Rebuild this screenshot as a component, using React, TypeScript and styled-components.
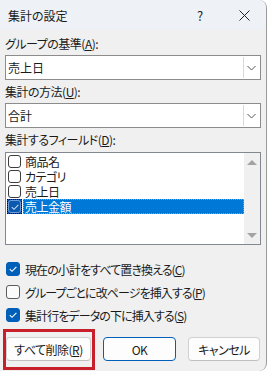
import React from 'react';
import styled, { createGlobalStyle } from 'styled-components';

const Global = createGlobalStyle`
    html, body {
        margin: 0;
        padding: 0;
        background: #ffffff;
    }
    body {
        font-family: 'Noto Sans CJK JP', 'Noto Sans', sans-serif;
        font-feature-settings: 'palt';
        color: #1a1a1a;
    }
`;

const Window = styled.div`
    position: relative;
    width: 266px;
    height: 371px;
    background: #f0f0f0;
    border-right: 1px solid #9a9a9a;
    border-bottom-right-radius: 8px;
    border-top-right-radius: 8px;
    overflow: hidden;
    box-sizing: content-box;
`;

const TitleBar = styled.div`
    height: 30px;
    display: flex;
    align-items: center;
    background: #eef2f7;
    padding-left: 8px;
`;

const Title = styled.div`
    flex: 1;
    font-size: 12px;
`;

const TitleButton = styled.div<{ $w: number }>`
    width: ${p => p.$w}px;
    height: 30px;
    display: flex;
    align-items: center;
    justify-content: center;
    font-size: 13px;
    color: #222;
`;

const Body = styled.div`
    padding: 0 5px 0 5px;
    letter-spacing: -0.5px;
`;

const Label = styled.div<{ $top: number }>`
    margin-top: ${p => p.$top}px;
    height: 16px;
    line-height: 16px;
    font-size: 12px;
`;

const Combo = styled.div`
    margin-top: 3px;
    height: 23px;
    display: flex;
    background: #ffffff;
    border: 1px solid #8c8c8c;
`;

const ComboText = styled.div`
    flex: 1;
    padding-left: 2px;
    font-size: 12px;
    line-height: 23px;
    letter-spacing: 0;
`;

const ComboButton = styled.div`
    width: 15px;
    margin: 1px 1px 1px 0;
    border-left: 1px solid #d9d9d9;
    display: flex;
    align-items: center;
    justify-content: center;
`;

const List = styled.div`
    margin-top: 4px;
    height: 91px;
    display: flex;
    background: #ffffff;
    border: 1px solid #828790;
`;

const Items = styled.div`
    flex: 1;
    padding: 1px 0 0 0;
`;

const Item = styled.div<{ $selected?: boolean }>`
    height: 15px;
    display: flex;
    align-items: center;
    font-size: 12px;
    color: ${p => (p.$selected ? '#ffffff' : '#1a1a1a')};
`;

const BoxWrap = styled.div<{ $selected?: boolean }>`
    width: 15px;
    height: 15px;
    margin-left: 1px;
    display: flex;
    align-items: center;
    justify-content: center;
    box-sizing: border-box;
    border: 1px dotted ${p => (p.$selected ? '#000' : 'transparent')};
    background: ${p => (p.$selected ? '#0a58b0' : 'transparent')};
`;

const SmallBox = styled.div<{ $selected?: boolean }>`
    width: 13px;
    height: 13px;
    box-sizing: border-box;
    border: 1px solid ${p => (p.$selected ? '#6e9fd6' : '#3c3c3c')};
    border-radius: 3px;
    display: flex;
    align-items: center;
    justify-content: center;
`;

const ItemText = styled.div<{ $selected?: boolean }>`
    flex: 1;
    height: 15px;
    line-height: 13px;
    margin-left: 1px;
    padding-left: 1px;
    box-sizing: border-box;
    overflow: hidden;
    background: ${p => (p.$selected ? '#0078d7' : 'transparent')};
    border: 1px dotted ${p => (p.$selected ? '#ff8c00' : 'transparent')};
`;

const ScrollBar = styled.div`
    width: 16px;
    background: #f0f0f0;
    display: flex;
    flex-direction: column;
    justify-content: space-between;
    align-items: center;
    padding: 7px 0 6px;
`;

const Arrow = styled.div<{ $down?: boolean }>`
    width: 0;
    height: 0;
    border-left: 5px solid transparent;
    border-right: 5px solid transparent;
    ${p =>
        p.$down
            ? 'border-top: 5px solid #a3a3a3;'
            : 'border-bottom: 5px solid #a3a3a3;'}
`;

const Options = styled.div`
    margin-top: 14px;
    display: flex;
    flex-direction: column;
    gap: 3px;
`;

const Option = styled.div`
    height: 20px;
    display: flex;
    align-items: center;
    gap: 5px;
    font-size: 12px;
    letter-spacing: -0.9px;
`;

const CheckBox = styled.div<{ $checked?: boolean }>`
    width: 14px;
    height: 14px;
    margin-left: 1px;
    box-sizing: border-box;
    border-radius: 3px;
    border: 1px solid ${p => (p.$checked ? '#005fb8' : '#5c5c5c')};
    background: ${p => (p.$checked ? '#005fb8' : '#fbfbfb')};
    display: flex;
    align-items: center;
    justify-content: center;
`;

const Buttons = styled.div`
    margin-top: 12px;
    display: flex;
`;

const Button = styled.div<{ $primary?: boolean; $w: number; $ml: number }>`
    width: ${p => p.$w}px;
    margin-left: ${p => p.$ml}px;
    height: 24px;
    box-sizing: border-box;
    border-radius: 4px;
    background: #fdfdfd;
    border: 1px solid ${p => (p.$primary ? '#005fb8' : '#d0d0d0')};
    border-bottom-color: ${p => (p.$primary ? '#005fb8' : '#c0c0c0')};
    display: flex;
    align-items: center;
    justify-content: center;
    font-size: 12px;
`;

const Highlight = styled.div`
    position: absolute;
    left: 3px;
    top: 329px;
    width: 92px;
    height: 41px;
    box-sizing: border-box;
    border: 3px solid #c8202a;
`;

const Check = ({ color }: { color: string }) => (
    <svg width="10" height="10" viewBox="0 0 10 10">
        <polyline points="1.8,5.2 4,7.3 8.4,2.8" fill="none" stroke={color} strokeWidth="1.1" />
    </svg>
);

const Chevron = () => (
    <svg width="9" height="6" viewBox="0 0 9 6">
        <polyline points="0.5,1 4.5,5 8.5,1" fill="none" stroke="#555" strokeWidth="1" />
    </svg>
);

const fields = ['商品名', 'カテゴリ', '売上日', '売上金額'];

const options = [
    { text: '現在の小計をすべて置き換える', key: 'C', checked: true },
    { text: 'グループごとに改ページを挿入する', key: 'P', checked: false },
    { text: '集計行をデータの下に挿入する', key: 'S', checked: true }
];

export default function App() {
    return (
        <>
            <Global />
            <Window>
                <TitleBar>
                    <Title>集計の設定</Title>
                    <TitleButton $w={46}>?</TitleButton>
                    <TitleButton $w={43}>
                        <svg width="11" height="11" viewBox="0 0 11 11">
                            <path d="M0.5 0.5 L10.5 10.5 M10.5 0.5 L0.5 10.5" stroke="#222" strokeWidth="1" />
                        </svg>
                    </TitleButton>
                </TitleBar>
                <Body>
                    <Label $top={6}>
                        グループの基準(<u>A</u>):
                    </Label>
                    <Combo>
                        <ComboText>売上日</ComboText>
                        <ComboButton>
                            <Chevron />
                        </ComboButton>
                    </Combo>
                    <Label $top={4}>
                        集計の方法(<u>U</u>):
                    </Label>
                    <Combo>
                        <ComboText>合計</ComboText>
                        <ComboButton>
                            <Chevron />
                        </ComboButton>
                    </Combo>
                    <Label $top={4}>
                        集計するフィールド(<u>D</u>):
                    </Label>
                    <List>
                        <Items>
                            {fields.map((f, i) => {
                                const sel = i === fields.length - 1;
                                return (
                                    <Item key={f} $selected={sel}>
                                        <BoxWrap $selected={sel}>
                                            <SmallBox $selected={sel}>
                                                {sel && <Check color="#c8dcf0" />}
                                            </SmallBox>
                                        </BoxWrap>
                                        <ItemText $selected={sel}>{f}</ItemText>
                                    </Item>
                                );
                            })}
                        </Items>
                        <ScrollBar>
                            <Arrow />
                            <Arrow $down />
                        </ScrollBar>
                    </List>
                    <Options>
                        {options.map(o => (
                            <Option key={o.key}>
                                <CheckBox $checked={o.checked}>
                                    {o.checked && <Check color="#ffffff" />}
                                </CheckBox>
                                <span>
                                    {o.text}(<u>{o.key}</u>)
                                </span>
                            </Option>
                        ))}
                    </Options>
                    <Buttons>
                        <Button $w={85} $ml={1}>
                            すべて削除(<u>R</u>)
                        </Button>
                        <Button $w={73} $ml={12} $primary>
                            OK
                        </Button>
                        <Button $w={72} $ml={12}>
                            キャンセル
                        </Button>
                    </Buttons>
                </Body>
                <Highlight />
            </Window>
        </>
    );
}
